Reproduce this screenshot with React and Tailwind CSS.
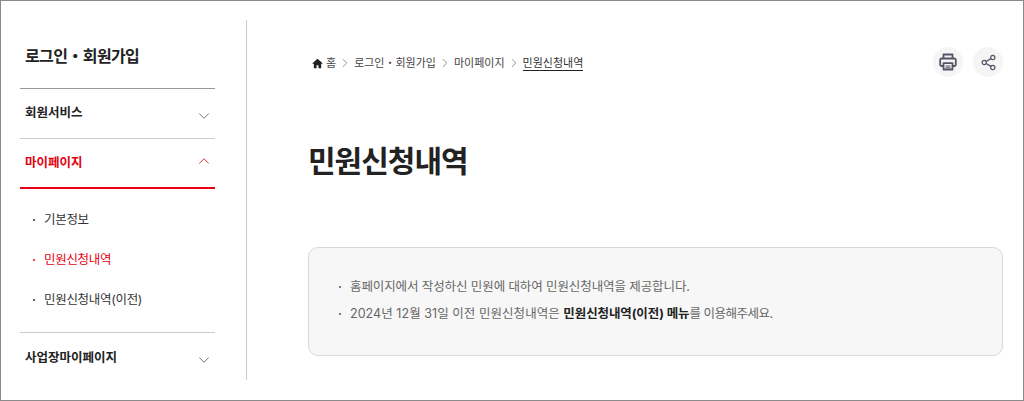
import React from "react";
import { ChevronDown, ChevronUp, ChevronRight, Share2 } from "lucide-react";

const Crumb = ({ children, current }) => (
  <span className={current ? "border-b border-[#222] leading-[14px] text-[#333]" : "leading-[14px] text-[#444]"}>{children}</span>
);

const Sep = () => <ChevronRight size={14} strokeWidth={1.1} className="mx-[2px] text-[#555]" />;

const SubItem = ({ label, active }) => (
  <li className={`flex h-10 items-center text-[12.5px] tracking-[-0.3px] ${active ? "text-[#e60012]" : "text-[#333]"}`}>
    <span className={`ml-[13px] mr-[9px] h-[2px] w-[2px] rounded-full ${active ? "bg-[#e60012]" : "bg-[#333]"}`}></span>
    {label}
  </li>
);

const App = () => {
  return (
    <div className="flex h-[401px] w-[1024px] border border-[#8a8a8a] bg-white font-['Inter','Noto_Sans_CJK_KR',sans-serif] overflow-hidden">
      {/* sidebar */}
      <aside className="ml-[19px] w-[195px] shrink-0">
        <h2 className="flex h-[87px] items-center pt-[22px] pl-[5px] text-[16px] font-bold tracking-[-0.6px] text-[#222]">
          로그인・회원가입
        </h2>
        <div className="flex h-[50px] items-center justify-between border-t border-[#999] pl-[5px] pr-[2px] text-[12.5px] font-bold text-[#222]">
          <span className="-mt-px">회원서비스</span>
          <ChevronDown size={18} strokeWidth={1.1} className="mt-[5px] text-[#555]" />
        </div>
        <div className="flex h-[51px] items-center justify-between border-t border-b-2 border-t-[#ccc] border-b-[#e60012] pl-[5px] pr-[2px] text-[12.5px] font-bold text-[#e60012]">
          <span>마이페이지</span>
          <ChevronUp size={18} strokeWidth={1.1} className="-mt-[5px]" />
        </div>
        <ul className="pt-[11px] pb-[12px]">
          <SubItem label="기본정보" />
          <SubItem label="민원신청내역" active />
          <SubItem label="민원신청내역(이전)" />
        </ul>
        <div className="flex h-[50px] items-center justify-between border-t border-[#ccc] pl-[5px] pr-[2px] text-[12.5px] font-bold text-[#222]">
          <span className="mt-px">사업장마이페이지</span>
          <ChevronDown size={18} strokeWidth={1.1} className="mt-[5px] text-[#555]" />
        </div>
      </aside>

      {/* divider */}
      <div className="ml-[31px] mt-[19px] h-[360px] w-px bg-[#ccc]"></div>

      {/* main */}
      <main className="ml-[61px] w-[695px] shrink-0">
        <div className="mt-[45px] flex h-[32px] items-center justify-between">
          <nav className="flex items-center pl-[4px] pt-[2px] text-[11px]">
            <svg width="11" height="11" viewBox="0 0 12 12" className="mr-[3px] text-[#222]" fill="currentColor">
              <path d="M6 .8 .4 5.8l.8.8L2 6v5.2h3V8h2v3.2h3V6l.8.6.8-.8z" />
            </svg>
            <Crumb>홈</Crumb>
            <Sep />
            <Crumb>로그인・회원가입</Crumb>
            <Sep />
            <Crumb>마이페이지</Crumb>
            <Sep />
            <Crumb current>민원신청내역</Crumb>
          </nav>
          <div className="flex gap-[10px]">
            <button className="flex h-[30px] w-[30px] items-center justify-center rounded-full bg-[#f5f5f6] text-[#555566]">
              <svg width="18" height="18" viewBox="0 0 18 18" fill="none" stroke="currentColor" strokeWidth="1.8" strokeLinejoin="round">
                <path d="M4.5 5.5V1.5h9v4" />
                <path d="M4.5 13H2.6A1.4 1.4 0 0 1 1.2 11.6V7A1.5 1.5 0 0 1 2.7 5.5h12.6A1.5 1.5 0 0 1 16.8 7v4.6a1.4 1.4 0 0 1-1.4 1.4h-1.9" />
                <path d="M4.5 10.2h9v6.3h-9z" />
                <path d="M6.5 13h5M6.5 14.8h5" strokeWidth="1" />
              </svg>
            </button>
            <button className="flex h-[30px] w-[30px] items-center justify-center rounded-full bg-[#f5f5f6] text-[#555566]">
              <Share2 size={17} strokeWidth={1.7} />
            </button>
          </div>
        </div>
        <h1 className="mt-[63px] text-[30px] leading-[40px] font-bold tracking-[-1px] text-[#222]">민원신청내역</h1>
        <div className="mt-[66px] h-[109px] rounded-[10px] border border-[#d8d8d8] bg-[#f7f7f7] pl-[30px] pt-[25px] text-[12.5px] leading-[27px] tracking-[-0.1px] text-[#666]">
          <p className="flex items-center">
            <span className="mr-[9px] h-[2px] w-[2px] rounded-full bg-[#555]"></span>
            홈페이지에서 작성하신 민원에 대하여 민원신청내역을 제공합니다.
          </p>
          <p className="flex items-center whitespace-pre">
            <span className="mr-[9px] h-[2px] w-[2px] rounded-full bg-[#555]"></span>
            <span className="tracking-[0.05px]">2024년 12월 31일 이전 민원신청내역은 </span>
            <b className="font-bold text-[#222]">민원신청내역(이전) 메뉴</b>
            <span className="tracking-[-0.5px]">를 이용해주세요.</span>
          </p>
        </div>
      </main>
    </div>
  );
};

export default App;
